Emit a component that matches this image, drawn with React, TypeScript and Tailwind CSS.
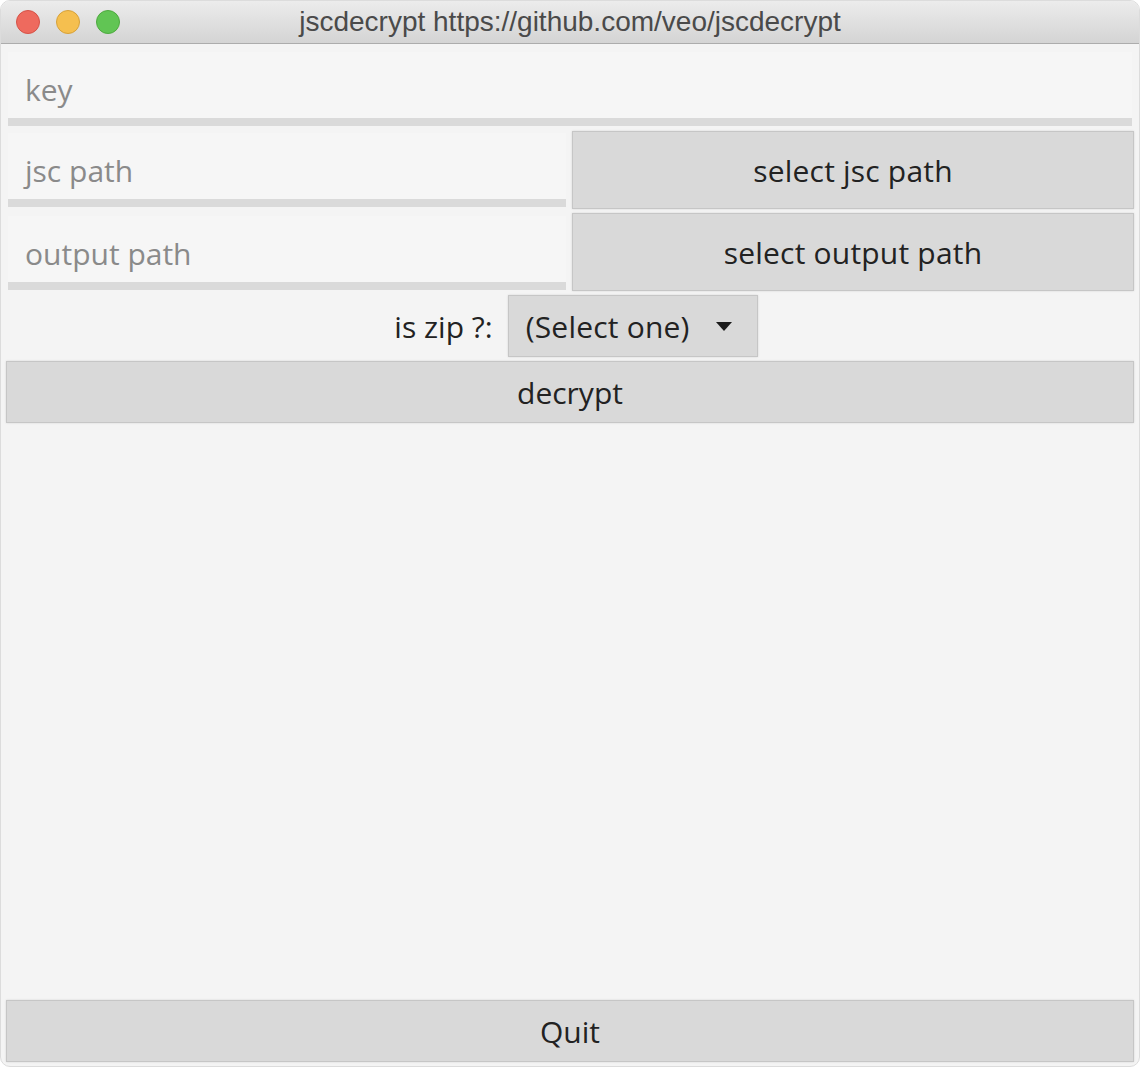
import React from "react";

const btn =
  "bg-[#d9d9d9] border border-[#c6c6c6] shadow-[0_0_2px_rgba(0,0,0,0.12)] flex items-center justify-center text-[#222222]";

export default function App() {
  return (
    <div className="w-[1140px] h-[1068px] bg-white" style={{ fontFamily: '"Open Sans", sans-serif' }}>
      <div className="w-[1140px] h-[1067px] rounded-[10px] overflow-hidden bg-[#f4f4f4] flex flex-col border border-[#dcdcdc]">
        {/* title bar */}
        <div className="relative h-[43px] shrink-0 bg-gradient-to-b from-[#ececec] to-[#d4d4d4] border-b border-[#acacac] flex items-center justify-center">
          <div className="absolute left-[15px] top-[9px] flex gap-[16px]">
            <div className="w-[24px] h-[24px] rounded-full bg-[#ee6a5e] border border-[#d55247]" />
            <div className="w-[24px] h-[24px] rounded-full bg-[#f5bf4f] border border-[#d6a13a]" />
            <div className="w-[24px] h-[24px] rounded-full bg-[#61c554] border border-[#4ea93f]" />
          </div>
          <span
            className="text-[28px] text-[#4a4a4a] leading-none"
            style={{ fontFamily: '"Liberation Sans", Arial, sans-serif' }}
          >
            jscdecrypt https://github.com/veo/jscdecrypt
          </span>
        </div>

        {/* content */}
        <div className="flex-1 flex flex-col px-[5px] pt-[8px] pb-[4px]">
          {/* key */}
          <div className="mx-[2px] h-[74px] bg-[#f6f6f6] border-b-[8px] border-[#dadada] flex items-center pl-[17px] pt-[8px] text-[30px] text-[#8a8a8a]">
            key
          </div>

          <div className="flex mt-[5px] h-[78px]">
            <div className="ml-[2px] w-[558px] self-end mb-[2px] h-[74px] bg-[#f6f6f6] border-b-[8px] border-[#dadada] flex items-center pl-[17px] pt-[8px] text-[30px] text-[#8a8a8a]">
              jsc path
            </div>
            <div className={`${btn} ml-[6px] w-[562px] h-[78px] text-[30px] tracking-[0.2px]`}>select jsc path</div>
          </div>

          <div className="flex mt-[4px] h-[78px]">
            <div className="ml-[2px] w-[558px] self-end mb-[1px] h-[74px] bg-[#f6f6f6] border-b-[8px] border-[#dadada] flex items-center pl-[17px] pt-[8px] text-[30px] text-[#8a8a8a]">
              output path
            </div>
            <div className={`${btn} ml-[6px] w-[562px] h-[78px] text-[30px] tracking-[0.2px]`}>select output path</div>
          </div>

          <div className="flex items-center justify-center mt-[4px] h-[62px] gap-[15px] pl-[12px]">
            <span className="text-[30px] text-[#222222]">is zip ?:</span>
            <div className={`${btn} w-[250px] h-[62px] text-[30px] !justify-start pl-[17px] gap-[26px]`}>
              <span className="tracking-[0.2px]">(Select one)</span>
              <svg width="16" height="9" viewBox="0 0 16 9">
                <path d="M0 0 L16 0 L8 9 Z" fill="#1a1a1a" />
              </svg>
            </div>
          </div>

          <div className={`${btn} mt-[4px] w-[1128px] h-[62px] text-[30px]`}>decrypt</div>

          <div className="flex-1" />

          <div className={`${btn} w-[1128px] h-[62px] text-[30px]`}>Quit</div>
        </div>
      </div>
    </div>
  );
}
